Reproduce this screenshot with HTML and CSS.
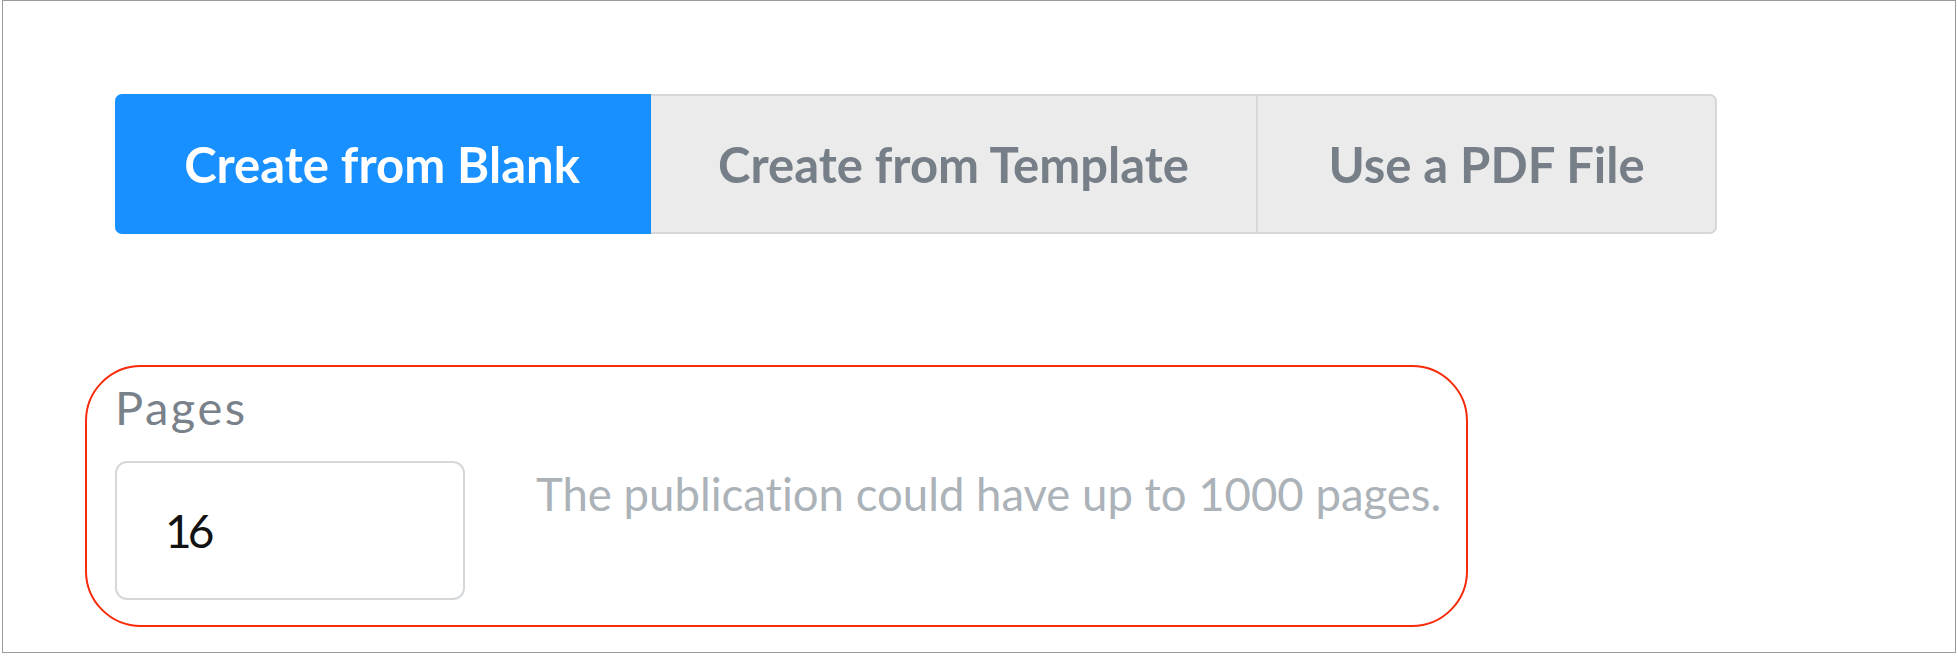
FILE: index.html
```html
<!DOCTYPE html>
<html lang="en">
<head>
<meta charset="utf-8">
<title>New Publication</title>
<link rel="stylesheet" href="styles.css">
</head>
<body>
<div class="frame">
  <div class="tabs">
    <button class="tab tab-blank active">Create from Blank</button>
    <button class="tab tab-template">Create from Template</button>
    <button class="tab tab-pdf">Use a PDF File</button>
  </div>
  <div class="field">
    <div class="label">Pages</div>
    <div class="row">
      <div class="input">16</div>
      <div class="hint">The publication could have up to 1000 pages.</div>
    </div>
  </div>
</div>
</body>
</html>
```

FILE: styles.css
```css
* { box-sizing: border-box; }
html, body { margin: 0; padding: 0; background: #fff; }
body {
  font-family: "Lato", "Noto Sans", sans-serif;
  font-variant-ligatures: none;
}

.frame {
  margin-left: 2px;
  width: 1954px;
  height: 653px;
  border: 1px solid #9a9a9a;
  padding-top: 93px;
  padding-left: 112px;
}

.tabs {
  display: flex;
  height: 140px;
}
.tab {
  font-family: "Lato", "Noto Sans", sans-serif;
  font-variant-ligatures: none;
  font-weight: 700;
  font-size: 49px;
  color: #767e87;
  background: #ebebeb;
  border: 2px solid #d4d8db;
  border-left: none;
  margin: 0;
  padding: 0;
  height: 140px;
  cursor: pointer;
}
.tab-blank { width: 536px; }
.tab-template { width: 607px; }
.tab-pdf { width: 459px; border-radius: 0 7px 7px 0; }
.tab.active {
  background: #1890ff;
  border-color: #1890ff;
  color: #fff;
  border-radius: 7px 0 0 7px;
}

.field {
  margin-top: 131px;
  margin-left: -30px;
  width: 1383px;
  height: 262px;
  border: 2px solid #f72a0a;
  border-radius: 56px;
  padding: 17px 0 0 28px;
}
.label {
  font-size: 47px;
  line-height: 46px;
  letter-spacing: 2.5px;
  color: #79818a;
  margin-bottom: 31px;
}
.row {
  display: flex;
  align-items: flex-start;
  gap: 71px;
}
.input {
  flex-shrink: 0;
  width: 350px;
  height: 139px;
  border: 2px solid #d4d8db;
  border-radius: 12px;
  padding-left: 48px;
  display: flex;
  align-items: center;
  font-size: 46px;
  letter-spacing: -4px;
  color: #111;
}
.hint {
  flex-shrink: 0;
  white-space: nowrap;
  padding-top: 10px;
  font-size: 45.5px;
  line-height: 46px;
  color: #abb2b8;
}
```
